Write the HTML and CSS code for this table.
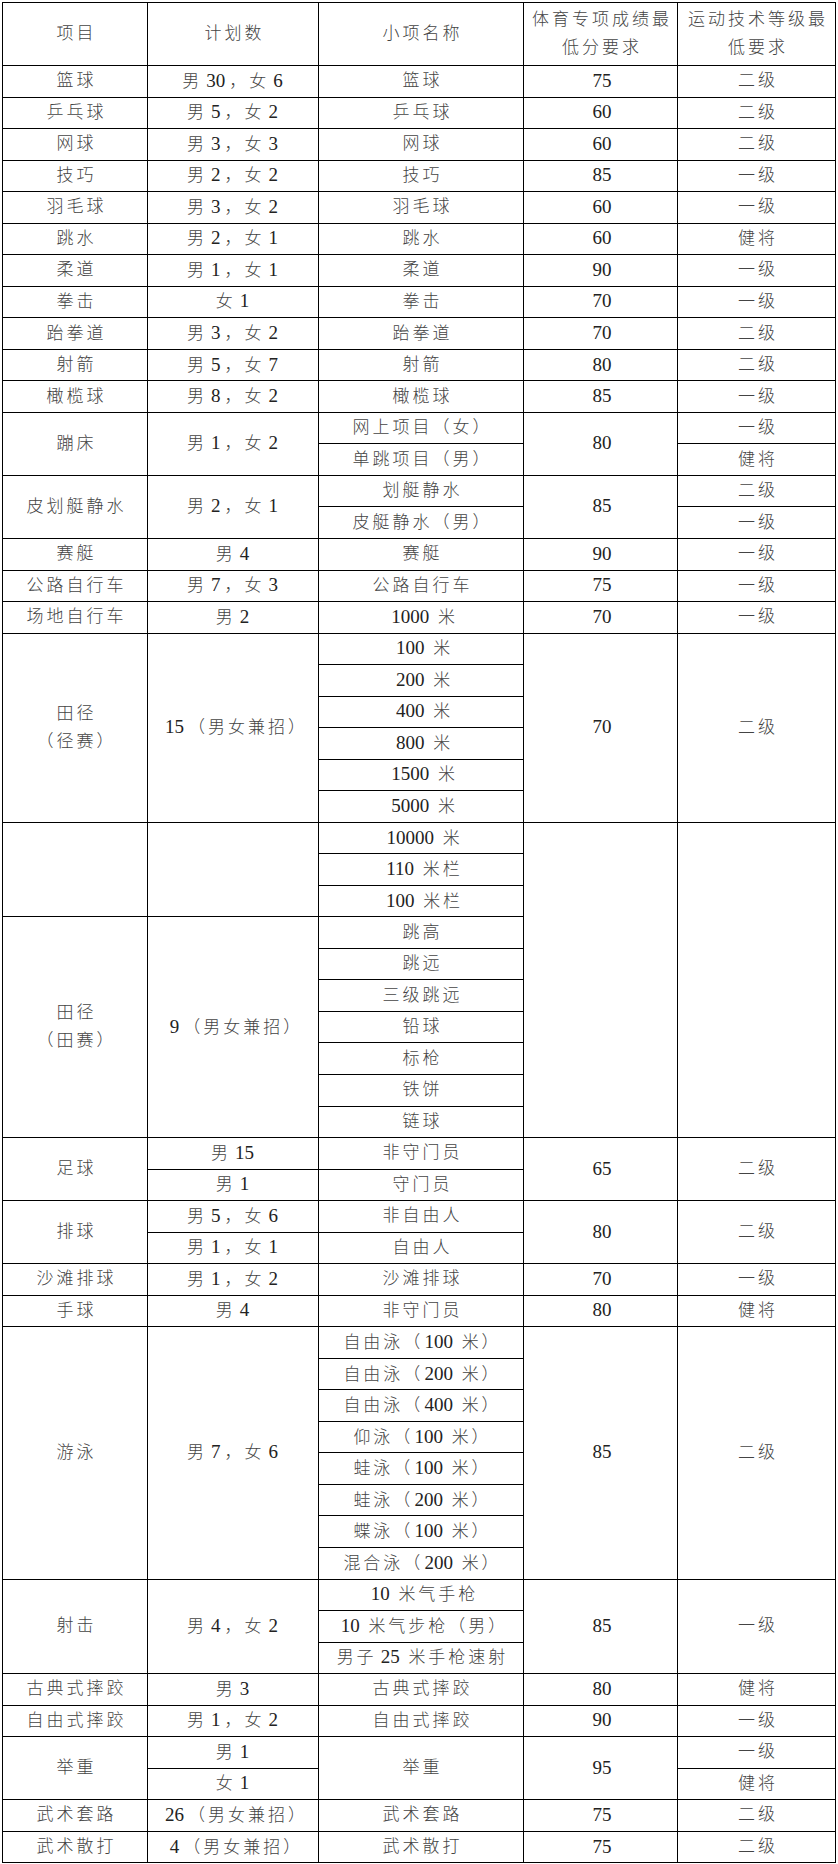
FILE: index.html
```html
<!DOCTYPE html>
<html lang="zh-CN">
<head>
<meta charset="utf-8">
<title>招生项目计划表</title>
<link rel="stylesheet" href="styles.css">
</head>
<body>
<table class="plan">
<colgroup>
<col class="c1"><col class="c2"><col class="c3"><col class="c4"><col class="c5">
</colgroup>
<thead>
<tr class="head">
<th>项目</th><th>计划数</th><th>小项名称</th><th>体育专项成绩最<br>低分要求</th><th>运动技术等级最<br>低要求</th>
</tr>
</thead>
<tbody>
<tr><td>篮球</td><td>男<span class="n">30</span>，女<span class="n">6</span></td><td>篮球</td><td><span class="n">75</span></td><td>二级</td></tr>
<tr><td>乒乓球</td><td>男<span class="n">5</span>，女<span class="n">2</span></td><td>乒乓球</td><td><span class="n">60</span></td><td>二级</td></tr>
<tr><td>网球</td><td>男<span class="n">3</span>，女<span class="n">3</span></td><td>网球</td><td><span class="n">60</span></td><td>二级</td></tr>
<tr><td>技巧</td><td>男<span class="n">2</span>，女<span class="n">2</span></td><td>技巧</td><td><span class="n">85</span></td><td>一级</td></tr>
<tr><td>羽毛球</td><td>男<span class="n">3</span>，女<span class="n">2</span></td><td>羽毛球</td><td><span class="n">60</span></td><td>一级</td></tr>
<tr><td>跳水</td><td>男<span class="n">2</span>，女<span class="n">1</span></td><td>跳水</td><td><span class="n">60</span></td><td>健将</td></tr>
<tr><td>柔道</td><td>男<span class="n">1</span>，女<span class="n">1</span></td><td>柔道</td><td><span class="n">90</span></td><td>一级</td></tr>
<tr><td>拳击</td><td>女<span class="n">1</span></td><td>拳击</td><td><span class="n">70</span></td><td>一级</td></tr>
<tr><td>跆拳道</td><td>男<span class="n">3</span>，女<span class="n">2</span></td><td>跆拳道</td><td><span class="n">70</span></td><td>二级</td></tr>
<tr><td>射箭</td><td>男<span class="n">5</span>，女<span class="n">7</span></td><td>射箭</td><td><span class="n">80</span></td><td>二级</td></tr>
<tr><td>橄榄球</td><td>男<span class="n">8</span>，女<span class="n">2</span></td><td>橄榄球</td><td><span class="n">85</span></td><td>一级</td></tr>
<tr><td rowspan="2">蹦床</td><td rowspan="2">男<span class="n">1</span>，女<span class="n">2</span></td><td>网上项目（女）</td><td rowspan="2"><span class="n">80</span></td><td>一级</td></tr>
<tr><td>单跳项目（男）</td><td>健将</td></tr>
<tr><td rowspan="2">皮划艇静水</td><td rowspan="2">男<span class="n">2</span>，女<span class="n">1</span></td><td>划艇静水</td><td rowspan="2"><span class="n">85</span></td><td>二级</td></tr>
<tr><td>皮艇静水（男）</td><td>一级</td></tr>
<tr><td>赛艇</td><td>男<span class="n">4</span></td><td>赛艇</td><td><span class="n">90</span></td><td>一级</td></tr>
<tr><td>公路自行车</td><td>男<span class="n">7</span>，女<span class="n">3</span></td><td>公路自行车</td><td><span class="n">75</span></td><td>一级</td></tr>
<tr><td>场地自行车</td><td>男<span class="n">2</span></td><td><span class="n">1000 </span>米</td><td><span class="n">70</span></td><td>一级</td></tr>
<tr><td rowspan="6">田径<br>（径赛）</td><td rowspan="6"><span class="n">15</span>（男女兼招）</td><td><span class="n">100 </span>米</td><td rowspan="6"><span class="n">70</span></td><td rowspan="6">二级</td></tr>
<tr><td><span class="n">200 </span>米</td></tr>
<tr><td><span class="n">400 </span>米</td></tr>
<tr><td><span class="n">800 </span>米</td></tr>
<tr><td><span class="n">1500 </span>米</td></tr>
<tr><td><span class="n">5000 </span>米</td></tr>
<tr><td rowspan="3"></td><td rowspan="3"></td><td><span class="n">10000 </span>米</td><td rowspan="10"></td><td rowspan="10"></td></tr>
<tr><td><span class="n">110 </span>米栏</td></tr>
<tr><td><span class="n">100 </span>米栏</td></tr>
<tr><td rowspan="7">田径<br>（田赛）</td><td rowspan="7"><span class="n">9</span>（男女兼招）</td><td>跳高</td></tr>
<tr><td>跳远</td></tr>
<tr><td>三级跳远</td></tr>
<tr><td>铅球</td></tr>
<tr><td>标枪</td></tr>
<tr><td>铁饼</td></tr>
<tr><td>链球</td></tr>
<tr><td rowspan="2">足球</td><td>男<span class="n">15</span></td><td>非守门员</td><td rowspan="2"><span class="n">65</span></td><td rowspan="2">二级</td></tr>
<tr><td>男<span class="n">1</span></td><td>守门员</td></tr>
<tr><td rowspan="2">排球</td><td>男<span class="n">5</span>，女<span class="n">6</span></td><td>非自由人</td><td rowspan="2"><span class="n">80</span></td><td rowspan="2">二级</td></tr>
<tr><td>男<span class="n">1</span>，女<span class="n">1</span></td><td>自由人</td></tr>
<tr><td>沙滩排球</td><td>男<span class="n">1</span>，女<span class="n">2</span></td><td>沙滩排球</td><td><span class="n">70</span></td><td>一级</td></tr>
<tr><td>手球</td><td>男<span class="n">4</span></td><td>非守门员</td><td><span class="n">80</span></td><td>健将</td></tr>
<tr><td rowspan="8">游泳</td><td rowspan="8">男<span class="n">7</span>，女<span class="n">6</span></td><td>自由泳（<span class="n b">100 </span>米）</td><td rowspan="8"><span class="n">85</span></td><td rowspan="8">二级</td></tr>
<tr><td>自由泳（<span class="n b">200 </span>米）</td></tr>
<tr><td>自由泳（<span class="n b">400 </span>米）</td></tr>
<tr><td>仰泳（<span class="n b">100 </span>米）</td></tr>
<tr><td>蛙泳（<span class="n b">100 </span>米）</td></tr>
<tr><td>蛙泳（<span class="n b">200 </span>米）</td></tr>
<tr><td>蝶泳（<span class="n b">100 </span>米）</td></tr>
<tr><td>混合泳（<span class="n b">200 </span>米）</td></tr>
<tr><td rowspan="3">射击</td><td rowspan="3">男<span class="n">4</span>，女<span class="n">2</span></td><td><span class="n">10 </span>米气手枪</td><td rowspan="3"><span class="n">85</span></td><td rowspan="3">一级</td></tr>
<tr><td><span class="n">10 </span>米气步枪（男）</td></tr>
<tr><td>男子<span class="n">25 </span>米手枪速射</td></tr>
<tr><td>古典式摔跤</td><td>男<span class="n">3</span></td><td>古典式摔跤</td><td><span class="n">80</span></td><td>健将</td></tr>
<tr><td>自由式摔跤</td><td>男<span class="n">1</span>，女<span class="n">2</span></td><td>自由式摔跤</td><td><span class="n">90</span></td><td>一级</td></tr>
<tr><td rowspan="2">举重</td><td>男<span class="n">1</span></td><td rowspan="2">举重</td><td rowspan="2"><span class="n">95</span></td><td>一级</td></tr>
<tr><td>女<span class="n">1</span></td><td>健将</td></tr>
<tr><td>武术套路</td><td><span class="n">26</span>（男女兼招）</td><td>武术套路</td><td><span class="n">75</span></td><td>二级</td></tr>
<tr><td>武术散打</td><td><span class="n">4</span>（男女兼招）</td><td>武术散打</td><td><span class="n">75</span></td><td>二级</td></tr>
</tbody>
</table>
</body>
</html>
```

FILE: styles.css
```css
html, body {
  margin: 0;
  padding: 0;
  background: #ffffff;
}

body {
  padding: 2px 0 0 2px;
  font-family: "Liberation Serif", "Noto Sans CJK SC", serif;
  font-size: 17px;
  color: #444444;
}

.plan {
  border-collapse: collapse;
  table-layout: fixed;
  width: 834px;
}

.c1 { width: 145px; }
.c2 { width: 171px; }
.c3 { width: 205px; }
.c4 { width: 154px; }
.c5 { width: 158px; }

.plan th,
.plan td {
  border: 1px solid #000000;
  padding: 0 0 0 3px;
  text-align: center;
  vertical-align: middle;
  letter-spacing: 3px;
  line-height: 20px;
  font-weight: 300;
  white-space: nowrap;
}

.plan .head {
  height: 63px;
}

.plan .head th {
  line-height: 28px;
}

.plan tbody tr {
  height: 31.54px;
}

.plan td[rowspan="2"],
.plan td[rowspan="3"],
.plan td[rowspan="6"],
.plan td[rowspan="7"] {
  line-height: 28px;
}

.n {
  font-size: 19px;
  letter-spacing: 0;
  margin: 0 4px;
  color: #222222;
}

.n.b {
  margin-left: 1px;
}
```
